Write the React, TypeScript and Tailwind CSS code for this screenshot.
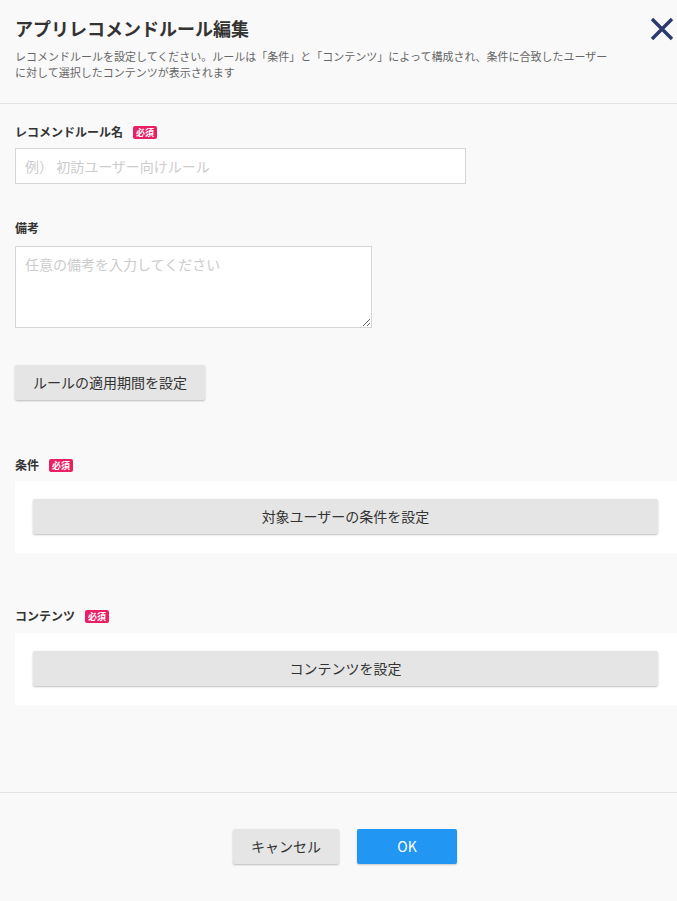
import React from "react";

const font = { fontFamily: '"Noto Sans CJK JP", "Noto Sans", sans-serif' };

function Badge() {
  return (
    <span className="ml-[10px] inline-flex h-[13px] items-center rounded-[2px] bg-[#e91e63] px-[3px] text-[9px] font-bold leading-none text-white">
      必須
    </span>
  );
}

function Label({ children, required }: { children: React.ReactNode; required?: boolean }) {
  return (
    <div className="flex h-[18px] items-center text-[12px] font-bold text-[#333]">
      <span>{children}</span>
      {required && <Badge />}
    </div>
  );
}

export default function App() {
  return (
    <div className="flex h-[901px] w-[677px] flex-col bg-[#f9f9f9]" style={font}>
      <div className="relative border-b border-[#e3e3e3] px-[15px] pb-[23px] pt-[14px]">
        <h1 className="text-[18px] font-bold leading-[28px] text-[#333]">アプリレコメンドルール編集</h1>
        <p className="mt-[6px] w-[600px] text-[11px] leading-[16px] text-[#666]">
          レコメンドルールを設定してください。ルールは「条件」と「コンテンツ」によって構成され、条件に合致したユーザーに対して選択したコンテンツが表示されます
        </p>
        <button className="absolute right-[2px] top-[16px] h-[26px] w-[26px] text-[#2c3a6b]">
          <svg viewBox="0 0 26 26" className="h-[26px] w-[26px]">
            <path d="M3 3 L23 23 M23 3 L3 23" stroke="currentColor" strokeWidth="3.4" strokeLinecap="butt" />
          </svg>
        </button>
      </div>

      <div className="flex-1 pl-[15px]">
        <div className="pt-[19px]">
          <Label required>レコメンドルール名</Label>
          <input
            className="mt-[7px] h-[36px] w-[451px] border border-[#d6d6d6] bg-white px-[9px] text-[14px] text-[#333] outline-none placeholder:text-[#cccccc]"
            placeholder="例） 初訪ユーザー向けルール"
            style={font}
          />
        </div>
        <div className="pt-[35px]">
          <Label>備考</Label>
          <textarea
            className="mt-[9px] block h-[82px] w-[357px] border border-[#d6d6d6] bg-white px-[9px] py-[7px] text-[14px] text-[#333] outline-none placeholder:text-[#cccccc]"
            placeholder="任意の備考を入力してください"
            style={font}
          />
        </div>
        <button className="mt-[37px] h-[35px] w-[190px] rounded-[2px] bg-[#e5e5e5] text-[14px] text-[#333] shadow-[0_1px_2px_rgba(0,0,0,0.25)]">
          ルールの適用期間を設定
        </button>

        <div className="pt-[56px]">
          <Label required>条件</Label>
          <div className="mt-[7px] bg-white pb-[19px] pl-[18px] pr-[19px] pt-[18px]">
            <button className="h-[35px] w-full rounded-[2px] bg-[#e5e5e5] text-[14px] text-[#333] shadow-[0_1px_2px_rgba(0,0,0,0.25)]">
              対象ユーザーの条件を設定
            </button>
          </div>
        </div>

        <div className="pt-[54px]">
          <Label required>コンテンツ</Label>
          <div className="mt-[8px] bg-white pb-[19px] pl-[18px] pr-[19px] pt-[18px]">
            <button className="h-[35px] w-full rounded-[2px] bg-[#e5e5e5] text-[14px] text-[#333] shadow-[0_1px_2px_rgba(0,0,0,0.25)]">
              コンテンツを設定
            </button>
          </div>
        </div>
      </div>

      <div className="flex h-[109px] items-start justify-center gap-[18px] border-t border-[#e3e3e3] pl-[13px] pt-[36px]">
        <button className="h-[35px] w-[106px] rounded-[2px] bg-[#e5e5e5] text-[14px] text-[#333] shadow-[0_1px_2px_rgba(0,0,0,0.25)]">
          キャンセル
        </button>
        <button className="h-[35px] w-[100px] rounded-[2px] bg-[#2196f3] text-[14px] text-white shadow-[0_1px_2px_rgba(0,0,0,0.2)]">
          OK
        </button>
      </div>
    </div>
  );
}
